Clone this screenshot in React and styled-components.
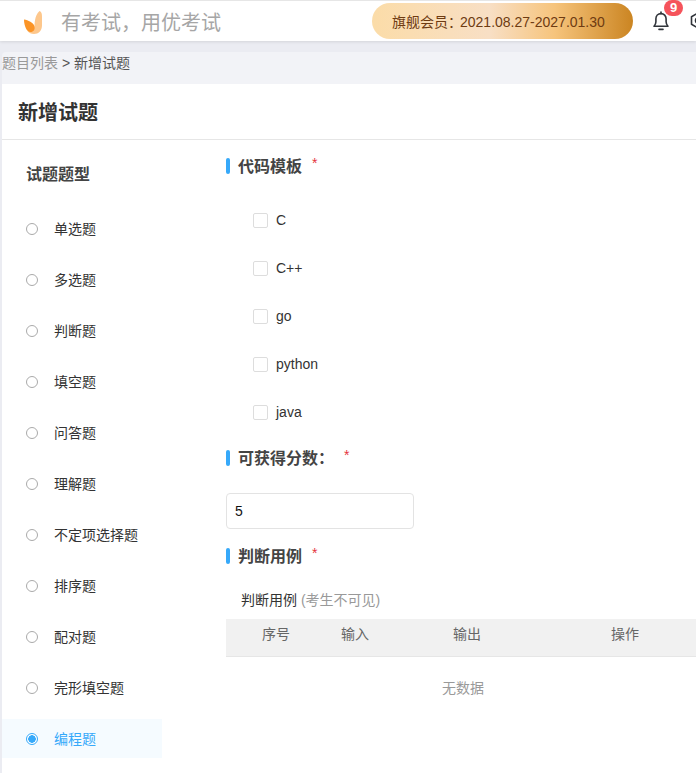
import React from 'react';
import styled, { createGlobalStyle } from 'styled-components';

const FONT = '"Liberation Sans", "Noto Sans CJK SC", sans-serif';

const questionTypes = ['单选题', '多选题', '判断题', '填空题', '问答题', '理解题', '不定项选择题', '排序题', '配对题', '完形填空题', '编程题'];
const languages = ['C', 'C++', 'go', 'python', 'java'];

const App = () => {
  return (
    <Page>
      <GlobalStyle />
      <Header>
        <Logo viewBox="0 0 18 23">
          <path d="M15.500 0C17.500 .5 18 3 18 6v8.500C18 19.500 14.500 23 10 23c-2.800 0-5-1-6.500-3 3.500.8 6-.5 6.800-4 .7-3.200-.3-11 5.200-16z" fill="#fdc78c" />
          <path d="M0 8.500c4 .5 9.500 3 10.500 7 .7 3-1 5.500-4 5.500C2.500 21 0 14.500 0 8.500z" fill="#fb9426" />
        </Logo>
        <Slogan>有考试，用优考试</Slogan>
        <MemberPill>旗舰会员：<PillDate>2021.08.27-2027.01.30</PillDate></MemberPill>
        <BellWrap>
          <svg width="18" height="20" viewBox="0 0 18 20" fill="none" stroke="#30343a" strokeWidth="1.6" strokeLinejoin="round" strokeLinecap="round">
            <path d="M2 15.200h14c-1.300-1.300-1.900-2.600-1.900-4.500V7.800C14.100 4.800 12 2.600 9 2.600S3.900 4.800 3.900 7.800v2.900c0 1.900-.6 3.200-1.900 4.500z" />
            <path d="M9 1v1.600M7 18.400h4" />
          </svg>
          <Badge>9</Badge>
        </BellWrap>
        <Gear viewBox="0 0 20 20" fill="none" stroke="#30343a" strokeWidth="1.6">
          <path d="M10 2l6.500 3.700v7.600L10 17l-6.500-3.700V5.700z" strokeLinejoin="round" />
          <circle cx="10" cy="9.500" r="2.500" />
        </Gear>
      </Header>
      <Main>
        <Panel>
          <Breadcrumb>
            <CrumbLink>题目列表</CrumbLink> &gt; 新增试题
          </Breadcrumb>
          <Card>
            <CardTitle>新增试题</CardTitle>
            <CardBody>
              <Sidebar>
                <SidebarTitle>试题题型</SidebarTitle>
                {questionTypes.map((name) => (
                  <TypeItem key={name} $active={name === '编程题'}>
                    <Radio $active={name === '编程题'} />
                    <TypeLabel>{name}</TypeLabel>
                  </TypeItem>
                ))}
              </Sidebar>
              <Content>
                <SectionTitle>代码模板<Star>*</Star></SectionTitle>
                <CheckList>
                  {languages.map((lang) => (
                    <CheckRow key={lang}>
                      <CheckBox />
                      {lang}
                    </CheckRow>
                  ))}
                </CheckList>
                <ScoreTitle>可获得分数：<Star>*</Star></ScoreTitle>
                <ScoreInput>5</ScoreInput>
                <CaseTitle>判断用例<Star>*</Star></CaseTitle>
                <CaseLabel>判断用例 <Muted>(考生不可见)</Muted></CaseLabel>
                <TableHead>
                  <HeadCell>序号</HeadCell>
                  <HeadCell>输入</HeadCell>
                  <HeadCell>输出</HeadCell>
                  <HeadCell>操作</HeadCell>
                </TableHead>
                <Empty>无数据</Empty>
              </Content>
            </CardBody>
          </Card>
        </Panel>
      </Main>
    </Page>
  );
};

const GlobalStyle = createGlobalStyle`
  html, body {
    margin: 0;
    padding: 0;
    background: #fff;
    overflow: hidden;
  }
`;

const Page = styled.div`
  width: 696px;
  height: 773px;
  overflow: hidden;
  font-family: ${FONT};
  color: #333;
`;

const Header = styled.header`
  height: 40px;
  border-top: 1px solid #e6e6e6;
  display: flex;
  align-items: center;
  background: #fff;
  padding-left: 24px;
  position: relative;
  box-shadow: 0 1px 3px rgba(0, 0, 0, 0.1);
`;

const Logo = styled.svg`
  width: 18px;
  height: 23px;
  flex: none;
  margin-top: 2px;
`;

const Slogan = styled.div`
  margin-left: 19px;
  font-size: 20px;
  color: #a6a6a6;
  width: 311px;
  flex: none;
`;

const MemberPill = styled.div`
  flex: none;
  width: 261px;
  height: 36px;
  border-radius: 18px;
  box-sizing: border-box;
  padding-left: 20px;
  line-height: 38px;
  font-size: 14px;
  white-space: nowrap;
  color: #6e3b12;
  background: linear-gradient(90deg, #fbdca8 0%, #f8dfc5 45%, #f6c47c 70%, #cb8522 100%);
`;

const PillDate = styled.span`
  margin-left: -2px;
`;

const BellWrap = styled.div`
  flex: none;
  position: relative;
  margin-left: 19px;
  width: 18px;
  height: 20px;
`;

const Badge = styled.span`
  position: absolute;
  left: 12px;
  top: -11px;
  width: 19px;
  height: 16px;
  border-radius: 8px;
  background: #f5535b;
  color: #fff;
  font-size: 13px;
  font-weight: bold;
  line-height: 16px;
  text-align: center;
`;

const Gear = styled.svg`
  flex: none;
  width: 20px;
  height: 20px;
  margin-left: 18px;
`;

const Main = styled.main`
  background: #ebecf2;
  padding: 11px 0 0 2px;
  height: 721px;
`;

const Panel = styled.div`
  background: #f2f3f7;
  border-radius: 4px 0 0 0;
`;

const Breadcrumb = styled.div`
  height: 32px;
  line-height: 23px;
  font-size: 14px;
  color: #555;
`;

const CrumbLink = styled.span`
  color: #999;
`;

const Card = styled.section`
  background: #fff;
  height: 689px;
`;

const CardTitle = styled.h1`
  margin: 0;
  height: 55px;
  padding-left: 16px;
  line-height: 59px;
  font-size: 20px;
  font-weight: bold;
  color: #333;
  border-bottom: 1px solid #e6e6e6;
`;

const CardBody = styled.div`
  display: flex;
`;

const Sidebar = styled.aside`
  width: 160px;
  flex: none;
  margin-right: 64px;
`;

const SidebarTitle = styled.div`
  height: 69px;
  padding-left: 24px;
  line-height: 69px;
  font-size: 16px;
  font-weight: bold;
  color: #444;
`;

const TypeItem = styled.div`
  height: 39px;
  margin-bottom: 12px;
  display: flex;
  align-items: center;
  padding-left: 24px;
  font-size: 14px;
  color: ${(p) => (p.$active ? '#36a9fa' : '#333')};
  background: ${(p) => (p.$active ? '#f5fbff' : 'transparent')};
`;

const TypeLabel = styled.span`
  margin-bottom: 2px;
`;

const Radio = styled.span`
  width: 12px;
  height: 12px;
  box-sizing: border-box;
  border-radius: 50%;
  margin-right: 16px;
  flex: none;
  border: 1px solid ${(p) => (p.$active ? '#36a9fa' : '#aaa')};
  background: ${(p) => (p.$active ? 'radial-gradient(circle, #36a9fa 0 3.500px, #fff 4px)' : '#fff')};
`;

const Content = styled.div`
  width: 474px;
  flex: none;
  padding-top: 16px;
`;

const SectionTitle = styled.h2`
  margin: 0;
  height: 20px;
  line-height: 22px;
  font-size: 16px;
  font-weight: bold;
  color: #444;
  position: relative;
  padding-left: 12px;
  display: flex;

  &::before {
    content: '';
    position: absolute;
    left: 0;
    top: 2px;
    width: 4px;
    height: 16px;
    border-radius: 2px;
    background: #36a9fa;
  }
`;

const ScoreTitle = styled(SectionTitle)`
  margin-top: 12px;
`;

const CaseTitle = styled(SectionTitle)`
  margin-top: 17px;
`;

const Star = styled.span`
  margin-left: 10px;
  color: #e5343d;
  font-size: 14px;
  font-weight: normal;
  line-height: 14px;
`;

const CheckList = styled.div`
  padding: 20px 0 0 27px;
`;

const CheckRow = styled.div`
  height: 48px;
  display: flex;
  align-items: center;
  font-size: 14px;
  color: #333;
`;

const CheckBox = styled.span`
  width: 15px;
  height: 15px;
  box-sizing: border-box;
  border: 1px solid #ddd;
  border-radius: 2px;
  margin-right: 8px;
  flex: none;
`;

const ScoreInput = styled.div`
  margin-top: 25px;
  width: 188px;
  height: 36px;
  box-sizing: border-box;
  border: 1px solid #e3e3e3;
  border-radius: 4px;
  padding-left: 8px;
  line-height: 35px;
  font-size: 14px;
  color: #111;
`;

const CaseLabel = styled.div`
  margin-top: 24px;
  padding-left: 15px;
  height: 20px;
  line-height: 20px;
  font-size: 14px;
  color: #333;
`;

const Muted = styled.span`
  color: #999;
`;

const TableHead = styled.div`
  margin-top: 9px;
  height: 37px;
  display: grid;
  grid-template-columns: 100px 58px 166px 150px;
  background: #f1f1f1;
  border-bottom: 1px solid #e6e6e6;
`;

const HeadCell = styled.div`
  text-align: center;
  line-height: 30px;
  font-size: 14px;
  color: #666;
`;

const Empty = styled.div`
  height: 62px;
  line-height: 62px;
  text-align: center;
  font-size: 14px;
  color: #999;
`;

export default App;
